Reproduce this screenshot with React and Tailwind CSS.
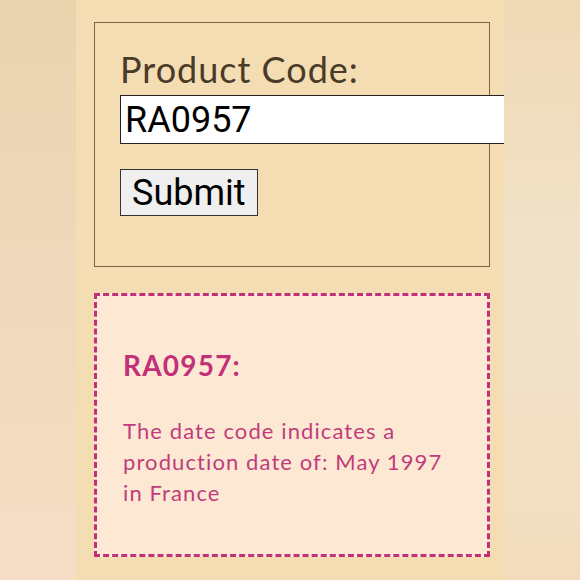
import React, { useState } from 'react';

const App = () => {
    const [code, setCode] = useState('RA0957');

    return (
        <div className="w-[580px] h-[580px] flex overflow-hidden" style={{ fontFamily: 'Lato, sans-serif' }}>
            {/* left blurred side */}
            <div className="w-[76px] h-full bg-gradient-to-b from-[#ead4ae] via-[#f0d8bc] to-[#f6dec6]" />

            {/* main column */}
            <div className="w-[428px] h-full bg-[#f4ddb3] px-[18px] pt-[22px] overflow-hidden">
                <form className="w-[396px] h-[245px] border border-[#7a6143] pl-[25px] pt-[25px]" onSubmit={(e) => e.preventDefault()}>
                    <label className="block text-[36px] leading-[1.2] tracking-[1px] text-[#4a3a28]">Product Code:</label>
                    <input
                        value={code}
                        onChange={(e) => setCode(e.target.value)}
                        className="block mt-[4px] w-[400px] h-[49px] bg-white border border-[#222] pl-[4px] text-[36px] text-black outline-none"
                        style={{ fontFamily: 'Roboto, sans-serif' }}
                    />
                    <button
                        type="submit"
                        className="block mt-[25px] h-[47px] px-[11px] bg-[#efefef] border border-[#333] text-[36px] leading-none text-black"
                        style={{ fontFamily: 'Roboto, sans-serif' }}
                    >
                        Submit
                    </button>
                </form>

                {/* result */}
                <div className="mt-[26px] w-[396px] h-[264px] border-[3px] border-dashed border-[#c2307a] bg-[#fde9d3] px-[26px] pt-[53px] text-[#c2307a]">
                    <h3 className="text-[28px] leading-[1.2] font-bold tracking-[1.2px]">RA0957:</h3>
                    <p className="mt-[32px] w-[336px] text-[22px] leading-[31px] tracking-[1.1px] text-[#c13c7c]">
                        The date code indicates a production date of: May 1997 in France
                    </p>
                </div>
            </div>

            {/* right blurred side */}
            <div className="flex-1 h-full bg-gradient-to-b from-[#efd9b6] via-[#f1e3ca] to-[#f2dcbd]" />
        </div>
    );
};

export default App;
